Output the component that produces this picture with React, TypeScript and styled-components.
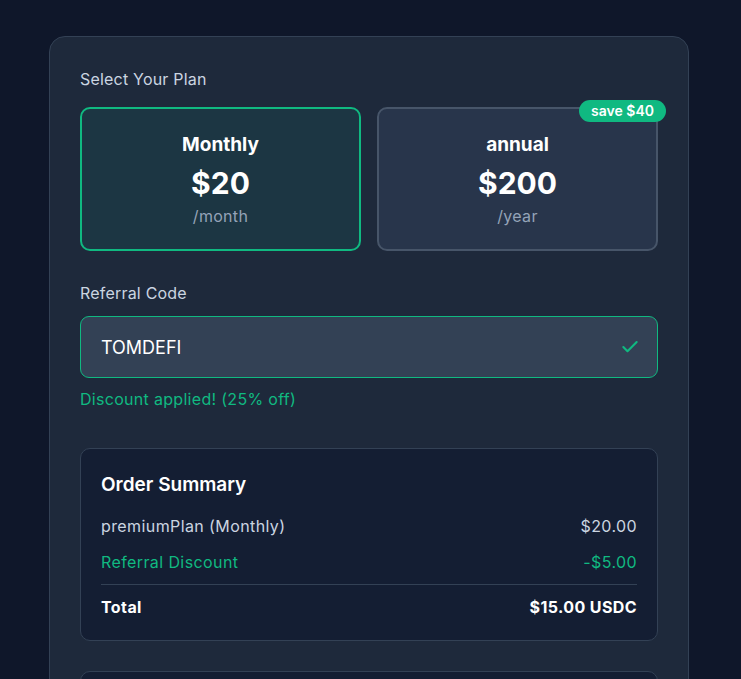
import React, { useState } from "react";
import styled, { createGlobalStyle } from "styled-components";
import { Check } from "lucide-react";

const GlobalStyle = createGlobalStyle`
  * { box-sizing: border-box; }
  body {
    margin: 0;
    background: #0f172a;
    font-family: Inter, "Noto Sans", sans-serif;
    color: #e2e8f0;
  }
`;

type PlanId = "monthly" | "annual";

const plans = [
  { id: "monthly" as PlanId, name: "Monthly", price: "$20", per: "/month" },
  { id: "annual" as PlanId, name: "annual", price: "$200", per: "/year", badge: "save $40" },
];

const App = () => {
  const [plan, setPlan] = useState<PlanId>("monthly");
  const [code, setCode] = useState("TOMDEFI");

  return (
    <>
      <GlobalStyle />
      <Page>
        <Panel>
          <Label>Select Your Plan</Label>
          <PlanGrid>
            {plans.map((p) => (
              <PlanCard key={p.id} $active={plan === p.id} onClick={() => setPlan(p.id)}>
                {p.badge && <Badge>{p.badge}</Badge>}
                <PlanName>{p.name}</PlanName>
                <PlanPrice>{p.price}</PlanPrice>
                <PlanPer>{p.per}</PlanPer>
              </PlanCard>
            ))}
          </PlanGrid>

          <Label $gap={12}>Referral Code</Label>
          <InputWrapper>
            <CodeInput value={code} onChange={(e) => setCode(e.target.value)} />
            <CheckIcon>
              <Check size={20} strokeWidth={2.5} />
            </CheckIcon>
          </InputWrapper>
          <Applied>Discount applied! (25% off)</Applied>

          <Summary>
            <SummaryTitle>Order Summary</SummaryTitle>
            <Row>
              <span>premiumPlan (Monthly)</span>
              <span>$20.00</span>
            </Row>
            <Row $green>
              <span>Referral Discount</span>
              <span>-$5.00</span>
            </Row>
            <Divider />
            <TotalRow>
              <span>Total</span>
              <span>$15.00 USDC</span>
            </TotalRow>
          </Summary>

          <Summary $tall />
        </Panel>
      </Page>
    </>
  );
};

export default App;

const Page = styled.div`
  padding: 36px 52px 0 49px;
  display: flex;
`;

const Panel = styled.div`
  width: 640px;
  background: #1e293b;
  border: 1px solid #334155;
  border-radius: 16px;
  padding: 31px 30px 40px 30px;
  display: flex;
  flex-direction: column;
`;

const Label = styled.div<{ $gap?: number }>`
  font-size: 16px;
  color: #cbd5e1;
  line-height: 22px;
  letter-spacing: 0.2px;
  margin-bottom: ${(p) => p.$gap ?? 17}px;
`;

const PlanGrid = styled.div`
  display: grid;
  grid-template-columns: 1fr 1fr;
  gap: 16px;
  margin-bottom: 31px;
`;

const PlanCard = styled.div<{ $active: boolean }>`
  position: relative;
  height: 144px;
  border-radius: 10px;
  border: 2px solid ${(p) => (p.$active ? "#10b981" : "#475569")};
  background: ${(p) => (p.$active ? "#1c3643" : "#28354b")};
  display: flex;
  flex-direction: column;
  align-items: center;
  padding-top: 23px;
  cursor: pointer;
`;

const Badge = styled.span`
  position: absolute;
  top: -9px;
  right: -10px;
  background: #10b981;
  color: #fff;
  font-size: 14px;
  font-weight: 600;
  line-height: 22px;
  padding: 0 12px;
  border-radius: 11px;
`;

const PlanName = styled.div`
  font-size: 19px;
  font-weight: 700;
  color: #fff;
  line-height: 26px;
`;

const PlanPrice = styled.div`
  font-size: 30px;
  font-weight: 700;
  color: #fff;
  line-height: 40px;
  margin-top: 5px;
`;

const PlanPer = styled.div`
  font-size: 16px;
  color: #94a3b8;
  line-height: 22px;
  letter-spacing: 0.3px;
  margin-top: 2px;
`;

const InputWrapper = styled.div`
  position: relative;
`;

const CodeInput = styled.input`
  width: 100%;
  height: 62px;
  background: #334155;
  border: 1px solid #10b981;
  border-radius: 9px;
  padding: 0 50px 0 20px;
  font-family: inherit;
  font-size: 18px;
  color: #fff;
  outline: none;
`;

const CheckIcon = styled.span`
  position: absolute;
  right: 18px;
  top: 50%;
  transform: translateY(-50%);
  display: flex;
  color: #10b981;
`;

const Applied = styled.div`
  color: #10b981;
  font-size: 16px;
  line-height: 22px;
  letter-spacing: 0.3px;
  margin-top: 10px;
  margin-bottom: 38px;
`;

const Summary = styled.div<{ $tall?: boolean }>`
  background: #141e33;
  border: 1px solid #334155;
  border-radius: 10px;
  padding: 23px 20px 22px;
  display: flex;
  flex-direction: column;
  margin-bottom: 30px;
  min-height: ${(p) => (p.$tall ? "120px" : "auto")};
`;

const SummaryTitle = styled.div`
  font-size: 19px;
  font-weight: 600;
  color: #fff;
  line-height: 26px;
  margin-bottom: 17px;
`;

const Row = styled.div<{ $green?: boolean }>`
  display: flex;
  justify-content: space-between;
  font-size: 16px;
  line-height: 22px;
  letter-spacing: 0.4px;
  color: ${(p) => (p.$green ? "#10b981" : "#cbd5e1")};
  margin-bottom: 14px;
`;

const Divider = styled.div`
  height: 1px;
  background: #334155;
  margin: -3px 0 11px;
`;

const TotalRow = styled.div`
  display: flex;
  justify-content: space-between;
  font-size: 16px;
  line-height: 22px;
  letter-spacing: 0.4px;
  font-weight: 700;
  color: #fff;
`;
